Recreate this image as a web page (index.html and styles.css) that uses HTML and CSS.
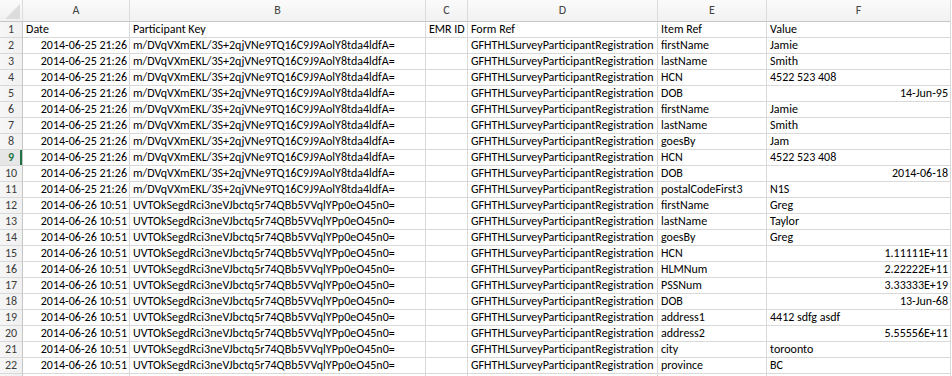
FILE: index.html
```html
<!DOCTYPE html>
<html>
<head>
<meta charset="utf-8">
<link rel="stylesheet" href="styles.css">
</head>
<body>
<table class="sheet">
<colgroup>
<col class="c-rh"><col class="c-a"><col class="c-b"><col class="c-c"><col class="c-d"><col class="c-e"><col class="c-f">
</colgroup>
<thead>
<tr class="colhdr">
<th class="corner"></th><th>A</th><th>B</th><th>C</th><th>D</th><th>E</th><th>F</th>
</tr>
</thead>
<tbody>
<tr><th>1</th><td>Date</td><td>Participant Key</td><td>EMR ID</td><td>Form Ref</td><td>Item Ref</td><td>Value</td></tr>
<tr><th>2</th><td class="r">2014-06-25 21:26</td><td>m/DVqVXmEKL/3S+2qjVNe9TQ16C9J9AolY8tda4ldfA=</td><td></td><td>GFHTHLSurveyParticipantRegistration</td><td>firstName</td><td>Jamie</td></tr>
<tr><th>3</th><td class="r">2014-06-25 21:26</td><td>m/DVqVXmEKL/3S+2qjVNe9TQ16C9J9AolY8tda4ldfA=</td><td></td><td>GFHTHLSurveyParticipantRegistration</td><td>lastName</td><td>Smith</td></tr>
<tr><th>4</th><td class="r">2014-06-25 21:26</td><td>m/DVqVXmEKL/3S+2qjVNe9TQ16C9J9AolY8tda4ldfA=</td><td></td><td>GFHTHLSurveyParticipantRegistration</td><td>HCN</td><td>4522 523 408</td></tr>
<tr><th>5</th><td class="r">2014-06-25 21:26</td><td>m/DVqVXmEKL/3S+2qjVNe9TQ16C9J9AolY8tda4ldfA=</td><td></td><td>GFHTHLSurveyParticipantRegistration</td><td>DOB</td><td class="r">14-Jun-95</td></tr>
<tr><th>6</th><td class="r">2014-06-25 21:26</td><td>m/DVqVXmEKL/3S+2qjVNe9TQ16C9J9AolY8tda4ldfA=</td><td></td><td>GFHTHLSurveyParticipantRegistration</td><td>firstName</td><td>Jamie</td></tr>
<tr><th>7</th><td class="r">2014-06-25 21:26</td><td>m/DVqVXmEKL/3S+2qjVNe9TQ16C9J9AolY8tda4ldfA=</td><td></td><td>GFHTHLSurveyParticipantRegistration</td><td>lastName</td><td>Smith</td></tr>
<tr><th>8</th><td class="r">2014-06-25 21:26</td><td>m/DVqVXmEKL/3S+2qjVNe9TQ16C9J9AolY8tda4ldfA=</td><td></td><td>GFHTHLSurveyParticipantRegistration</td><td>goesBy</td><td>Jam</td></tr>
<tr><th class="active">9</th><td class="r">2014-06-25 21:26</td><td>m/DVqVXmEKL/3S+2qjVNe9TQ16C9J9AolY8tda4ldfA=</td><td></td><td>GFHTHLSurveyParticipantRegistration</td><td>HCN</td><td>4522 523 408</td></tr>
<tr><th>10</th><td class="r">2014-06-25 21:26</td><td>m/DVqVXmEKL/3S+2qjVNe9TQ16C9J9AolY8tda4ldfA=</td><td></td><td>GFHTHLSurveyParticipantRegistration</td><td>DOB</td><td class="r">2014-06-18</td></tr>
<tr><th>11</th><td class="r">2014-06-25 21:26</td><td>m/DVqVXmEKL/3S+2qjVNe9TQ16C9J9AolY8tda4ldfA=</td><td></td><td>GFHTHLSurveyParticipantRegistration</td><td>postalCodeFirst3</td><td>N1S</td></tr>
<tr><th>12</th><td class="r">2014-06-26 10:51</td><td>UVTOkSegdRci3neVJbctq5r74QBb5VVqlYPp0eO45n0=</td><td></td><td>GFHTHLSurveyParticipantRegistration</td><td>firstName</td><td>Greg</td></tr>
<tr><th>13</th><td class="r">2014-06-26 10:51</td><td>UVTOkSegdRci3neVJbctq5r74QBb5VVqlYPp0eO45n0=</td><td></td><td>GFHTHLSurveyParticipantRegistration</td><td>lastName</td><td>Taylor</td></tr>
<tr><th>14</th><td class="r">2014-06-26 10:51</td><td>UVTOkSegdRci3neVJbctq5r74QBb5VVqlYPp0eO45n0=</td><td></td><td>GFHTHLSurveyParticipantRegistration</td><td>goesBy</td><td>Greg</td></tr>
<tr><th>15</th><td class="r">2014-06-26 10:51</td><td>UVTOkSegdRci3neVJbctq5r74QBb5VVqlYPp0eO45n0=</td><td></td><td>GFHTHLSurveyParticipantRegistration</td><td>HCN</td><td class="r">1.11111E+11</td></tr>
<tr><th>16</th><td class="r">2014-06-26 10:51</td><td>UVTOkSegdRci3neVJbctq5r74QBb5VVqlYPp0eO45n0=</td><td></td><td>GFHTHLSurveyParticipantRegistration</td><td>HLMNum</td><td class="r">2.22222E+11</td></tr>
<tr><th>17</th><td class="r">2014-06-26 10:51</td><td>UVTOkSegdRci3neVJbctq5r74QBb5VVqlYPp0eO45n0=</td><td></td><td>GFHTHLSurveyParticipantRegistration</td><td>PSSNum</td><td class="r">3.33333E+19</td></tr>
<tr><th>18</th><td class="r">2014-06-26 10:51</td><td>UVTOkSegdRci3neVJbctq5r74QBb5VVqlYPp0eO45n0=</td><td></td><td>GFHTHLSurveyParticipantRegistration</td><td>DOB</td><td class="r">13-Jun-68</td></tr>
<tr><th>19</th><td class="r">2014-06-26 10:51</td><td>UVTOkSegdRci3neVJbctq5r74QBb5VVqlYPp0eO45n0=</td><td></td><td>GFHTHLSurveyParticipantRegistration</td><td>address1</td><td>4412 sdfg asdf</td></tr>
<tr><th>20</th><td class="r">2014-06-26 10:51</td><td>UVTOkSegdRci3neVJbctq5r74QBb5VVqlYPp0eO45n0=</td><td></td><td>GFHTHLSurveyParticipantRegistration</td><td>address2</td><td class="r">5.55556E+11</td></tr>
<tr><th>21</th><td class="r">2014-06-26 10:51</td><td>UVTOkSegdRci3neVJbctq5r74QBb5VVqlYPp0eO45n0=</td><td></td><td>GFHTHLSurveyParticipantRegistration</td><td>city</td><td>toroonto</td></tr>
<tr><th>22</th><td class="r">2014-06-26 10:51</td><td>UVTOkSegdRci3neVJbctq5r74QBb5VVqlYPp0eO45n0=</td><td></td><td>GFHTHLSurveyParticipantRegistration</td><td>province</td><td>BC</td></tr>
<tr class="partial"><th></th><td></td><td></td><td></td><td></td><td></td><td></td></tr>
</tbody>
</table>
</body>
</html>
```
FILE: styles.css
```css
html, body {
  margin: 0;
  padding: 0;
  background: #ffffff;
  overflow: hidden;
}
.sheet {
  border-collapse: separate;
  border-spacing: 0;
  table-layout: fixed;
  width: 951px;
  font-family: "Carlito", "Lato", "Liberation Sans", sans-serif;
  font-size: 12px;
  color: #000;
}
.c-rh { width: 23px; }
.c-a { width: 107px; }
.c-b { width: 296px; }
.c-c { width: 42px; }
.c-d { width: 190px; }
.c-e { width: 109px; }
.c-f { width: 184px; }

.sheet td, .sheet th {
  border-right: 1px solid #d9d9d9;
  border-bottom: 1px solid #d9d9d9;
  padding: 0 2px 0 3px;
  height: 15px;
  line-height: 15px;
  white-space: nowrap;
  overflow: hidden;
  text-align: left;
  font-weight: normal;
  box-sizing: border-box;
}
.sheet tbody tr { height: 16px; }
.sheet td.r { text-align: right; }

.colhdr th {
  height: 22px;
  background: linear-gradient(#fbfbfb, #f1f1f1);
  border-right: 1px solid #dcdcdc;
  border-bottom: 1px solid #c6c6c6;
  text-align: center;
  color: #444;
  padding: 0;
}
.colhdr .corner {
  position: relative;
}
.colhdr .corner::after {
  content: "";
  position: absolute;
  right: 2px;
  bottom: 2px;
  width: 0;
  height: 0;
  border-left: 15px solid transparent;
  border-bottom: 15px solid #dcdcdc;
}
.sheet tbody th {
  background: linear-gradient(90deg, #f6f6f6, #f1f1f1);
  border-right: 1px solid #c6c6c6;
  text-align: center;
  color: #3c3c3c;
  padding: 0;
}
.sheet tbody th.active {
  color: #217346;
  font-weight: bold;
  box-shadow: inset -2px 0 0 #217346;
  background: #e6e6e6;
}
.partial th, .partial td {
  border-bottom: none;
}
```
